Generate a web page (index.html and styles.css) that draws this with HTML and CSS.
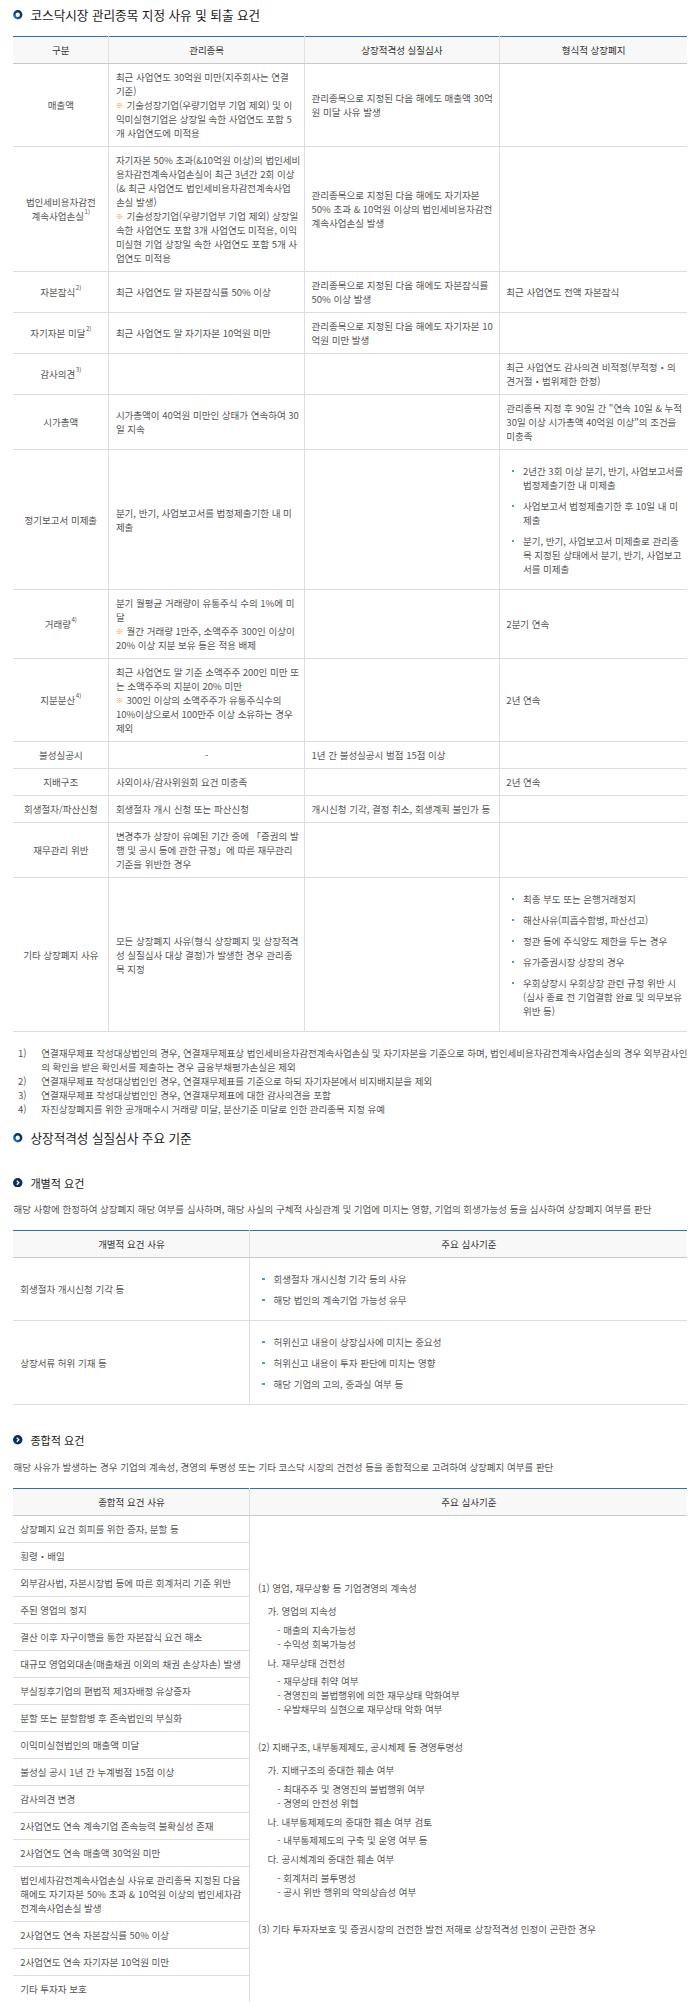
FILE: index.html
```html
<!DOCTYPE html>
<html lang="ko">
<head>
<meta charset="utf-8">
<title>코스닥시장 관리종목 지정 사유 및 퇴출 요건</title>
<link rel="stylesheet" href="styles.css">
</head>
<body>
<div class="page">
  <h2 class="title">
    <svg class="ring" viewBox="0 0 10 10" aria-hidden="true"><defs><linearGradient id="rg" x1="0" y1="1" x2="1" y2="0"><stop offset="0" stop-color="#1f8be0"/><stop offset="0.45" stop-color="#0e3d86"/><stop offset="1" stop-color="#0b2557"/></linearGradient></defs><circle cx="5" cy="5" r="3.6" fill="none" stroke="url(#rg)" stroke-width="2.6"/></svg>
    <span>코스닥시장 관리종목 지정 사유 및 퇴출 요건</span>
  </h2>

  <table class="tbl t4">
    <colgroup><col class="c1"><col class="c2"><col class="c3"><col class="c4"></colgroup>
    <thead>
      <tr><th>구분</th><th>관리종목</th><th>상장적격성 실질심사</th><th>형식적 상장폐지</th></tr>
    </thead>
    <tbody>
      <tr>
        <td class="k">매출액</td>
        <td class="lines">최근 사업연도 30억원 미만(지주회사는 연결<br>기준)<br><span class="mark">※</span> 기술성장기업(우량기업부 기업 제외) 및 이<br>익미실현기업은 상장일 속한 사업연도 포함 5<br>개 사업연도에 미적용</td>
        <td>관리종목으로 지정된 다음 해에도 매출액 30억원 미달 사유 발생</td>
        <td></td>
      </tr>
      <tr>
        <td class="k">법인세비용차감전<br>계속사업손실<sup>1)</sup></td>
        <td class="lines">자기자본 50% 초과(&amp;10억원 이상)의 법인세비<br>용차감전계속사업손실이 최근 3년간 2회 이상<br>(&amp; 최근 사업연도 법인세비용차감전계속사업<br>손실 발생)<br><span class="mark">※</span> 기술성장기업(우량기업부 기업 제외) 상장일<br>속한 사업연도 포함 3개 사업연도 미적용, 이익<br>미실현 기업 상장일 속한 사업연도 포함 5개 사<br>업연도 미적용</td>
        <td>관리종목으로 지정된 다음 해에도 자기자본 50% 초과 &amp; 10억원 이상의 법인세비용차감전계속사업손실 발생</td>
        <td></td>
      </tr>
      <tr>
        <td class="k">자본잠식<sup>2)</sup></td>
        <td>최근 사업연도 말 자본잠식률 50% 이상</td>
        <td>관리종목으로 지정된 다음 해에도 자본잠식률 50% 이상 발생</td>
        <td>최근 사업연도 전액 자본잠식</td>
      </tr>
      <tr>
        <td class="k">자기자본 미달<sup>2)</sup></td>
        <td>최근 사업연도 말 자기자본 10억원 미만</td>
        <td>관리종목으로 지정된 다음 해에도 자기자본 10억원 미만 발생</td>
        <td></td>
      </tr>
      <tr>
        <td class="k">감사의견<sup>3)</sup></td>
        <td></td>
        <td></td>
        <td>최근 사업연도 감사의견 비적정(부적정・의견거절・범위제한 한정)</td>
      </tr>
      <tr>
        <td class="k">시가총액</td>
        <td>시가총액이 40억원 미만인 상태가 연속하여 30일 지속</td>
        <td></td>
        <td>관리종목 지정 후 90일 간 "연속 10일 &amp; 누적 30일 이상 시가총액 40억원 이상"의 조건을 미충족</td>
      </tr>
      <tr>
        <td class="k">정기보고서 미제출</td>
        <td>분기, 반기, 사업보고서를 법정제출기한 내 미제출</td>
        <td></td>
        <td>
          <ul class="dots">
            <li class="lines">2년간 3회 이상 분기, 반기, 사업보고서를<br>법정제출기한 내 미제출</li>
            <li>사업보고서 법정제출기한 후 10일 내 미제출</li>
            <li>분기, 반기, 사업보고서 미제출로 관리종목 지정된 상태에서 분기, 반기, 사업보고서를 미제출</li>
          </ul>
        </td>
      </tr>
      <tr>
        <td class="k">거래량<sup>4)</sup></td>
        <td class="lines">분기 월평균 거래량이 유통주식 수의 1%에 미<br>달<br><span class="mark">※</span> 월간 거래량 1만주, 소액주주 300인 이상이<br>20% 이상 지분 보유 등은 적용 배제</td>
        <td></td>
        <td>2분기 연속</td>
      </tr>
      <tr>
        <td class="k">지분분산<sup>4)</sup></td>
        <td class="lines">최근 사업연도 말 기준 소액주주 200인 미만 또<br>는 소액주주의 지분이 20% 미만<br><span class="mark">※</span> 300인 이상의 소액주주가 유통주식수의<br>10%이상으로서 100만주 이상 소유하는 경우<br>제외</td>
        <td></td>
        <td>2년 연속</td>
      </tr>
      <tr>
        <td class="k">불성실공시</td>
        <td class="ctr">-</td>
        <td>1년 간 불성실공시 벌점 15점 이상</td>
        <td></td>
      </tr>
      <tr>
        <td class="k">지배구조</td>
        <td>사외이사/감사위원회 요건 미충족</td>
        <td></td>
        <td>2년 연속</td>
      </tr>
      <tr>
        <td class="k">회생절차/파산신청</td>
        <td>회생절차 개시 신청 또는 파산신청</td>
        <td>개시신청 기각, 결정 취소, 회생계획 불인가 등</td>
        <td></td>
      </tr>
      <tr>
        <td class="k">재무관리 위반</td>
        <td>변경추가 상장이 유예된 기간 중에 「증권의 발행 및 공시 등에 관한 규정」에 따른 재무관리 기준을 위반한 경우</td>
        <td></td>
        <td></td>
      </tr>
      <tr>
        <td class="k">기타 상장폐지 사유</td>
        <td>모든 상장폐지 사유(형식 상장폐지 및 상장적격성 실질심사 대상 결정)가 발생한 경우 관리종목 지정</td>
        <td></td>
        <td>
          <ul class="dots">
            <li>최종 부도 또는 은행거래정지</li>
            <li>해산사유(피흡수합병, 파산선고)</li>
            <li>정관 등에 주식양도 제한을 두는 경우</li>
            <li>유가증권시장 상장의 경우</li>
            <li>우회상장시 우회상장 관련 규정 위반 시 (심사 종료 전 기업결합 완료 및 의무보유 위반 등)</li>
          </ul>
        </td>
      </tr>
    </tbody>
  </table>

  <div class="notes">
    <div class="note"><span class="num">1)</span><span>연결재무제표 작성대상법인의 경우, 연결재무제표상 법인세비용차감전계속사업손실 및 자기자본을 기준으로 하며, 법인세비용차감전계속사업손실의 경우 외부감사인의 확인을 받은 확인서를 제출하는 경우 금융부채평가손실은 제외</span></div>
    <div class="note"><span class="num">2)</span><span>연결재무제표 작성대상법인인 경우, 연결재무제표를 기준으로 하되 자기자본에서 비지배지분을 제외</span></div>
    <div class="note"><span class="num">3)</span><span>연결재무제표 작성대상법인인 경우, 연결재무제표에 대한 감사의견을 포함</span></div>
    <div class="note"><span class="num">4)</span><span>자진상장폐지를 위한 공개매수시 거래량 미달, 분산기준 미달로 인한 관리종목 지정 유예</span></div>
  </div>

  <h2 class="title second">
    <svg class="ring" viewBox="0 0 10 10" aria-hidden="true"><defs><linearGradient id="rg2" x1="0" y1="1" x2="1" y2="0"><stop offset="0" stop-color="#1f8be0"/><stop offset="0.45" stop-color="#0e3d86"/><stop offset="1" stop-color="#0b2557"/></linearGradient></defs><circle cx="5" cy="5" r="3.6" fill="none" stroke="url(#rg2)" stroke-width="2.6"/></svg>
    <span>상장적격성 실질심사 주요 기준</span>
  </h2>

  <h3 class="sub first">
    <svg class="chev" viewBox="0 0 8 8" aria-hidden="true"><circle cx="4" cy="4" r="4" fill="#0d2c63"/><path d="M3.2 2.3 L4.9 4 L3.2 5.7" fill="none" stroke="#fff" stroke-width="1.1"/></svg>
    <span>개별적 요건</span>
  </h3>
  <p class="desc">해당 사항에 한정하여 상장폐지 해당 여부를 심사하며, 해당 사실의 구체적 사실관계 및 기업에 미치는 영향, 기업의 회생가능성 등을 심사하여 상장폐지 여부를 판단</p>

  <table class="tbl t2">
    <colgroup><col class="d1"><col class="d2"></colgroup>
    <thead>
      <tr><th>개별적 요건 사유</th><th>주요 심사기준</th></tr>
    </thead>
    <tbody>
      <tr>
        <td class="l">회생절차 개시신청 기각 등</td>
        <td>
          <ul class="dots">
            <li>회생절차 개시신청 기각 등의 사유</li>
            <li>해당 법인의 계속기업 가능성 유무</li>
          </ul>
        </td>
      </tr>
      <tr>
        <td class="l">상장서류 허위 기재 등</td>
        <td>
          <ul class="dots">
            <li>허위신고 내용이 상장심사에 미치는 중요성</li>
            <li>허위신고 내용이 투자 판단에 미치는 영향</li>
            <li>해당 기업의 고의, 중과실 여부 등</li>
          </ul>
        </td>
      </tr>
    </tbody>
  </table>

  <h3 class="sub">
    <svg class="chev" viewBox="0 0 8 8" aria-hidden="true"><circle cx="4" cy="4" r="4" fill="#0d2c63"/><path d="M3.2 2.3 L4.9 4 L3.2 5.7" fill="none" stroke="#fff" stroke-width="1.1"/></svg>
    <span>종합적 요건</span>
  </h3>
  <p class="desc">해당 사유가 발생하는 경우 기업의 계속성, 경영의 투명성 또는 기타 코스닥 시장의 건전성 등을 종합적으로 고려하여 상장폐지 여부를 판단</p>

  <table class="tbl t3">
    <colgroup><col class="d1"><col class="d2"></colgroup>
    <thead>
      <tr><th>종합적 요건 사유</th><th>주요 심사기준</th></tr>
    </thead>
    <tbody>
      <tr>
        <td class="l">상장폐지 요건 회피를 위한 증자, 분할 등</td>
        <td class="crit" rowspan="17">
          <div class="sec">
            <p class="h1">(1) 영업, 재무상황 등 기업경영의 계속성</p>
            <p class="h2">가. 영업의 지속성</p>
            <ul class="dash"><li>- 매출의 지속가능성</li><li>- 수익성 회복가능성</li></ul>
            <p class="h2">나. 재무상태 건전성</p>
            <ul class="dash"><li>- 재무상태 취약 여부</li><li>- 경영진의 불법행위에 의한 재무상태 악화여부</li><li>- 우발채무의 실현으로 재무상태 악화 여부</li></ul>
          </div>
          <div class="sec">
            <p class="h1">(2) 지배구조, 내부통제제도, 공시체제 등 경영투명성</p>
            <p class="h2">가. 지배구조의 중대한 훼손 여부</p>
            <ul class="dash"><li>- 최대주주 및 경영진의 불법행위 여부</li><li>- 경영의 안전성 위협</li></ul>
            <p class="h2">나. 내부통제제도의 중대한 훼손 여부 검토</p>
            <ul class="dash"><li>- 내부통제제도의 구축 및 운영 여부 등</li></ul>
            <p class="h2">다. 공시체계의 중대한 훼손 여부</p>
            <ul class="dash"><li>- 회계처리 불투명성</li><li>- 공시 위반 행위의 악의상습성 여부</li></ul>
          </div>
          <div class="sec last">
            <p class="h1">(3) 기타 투자자보호 및 증권시장의 건전한 발전 저해로 상장적격성 인정이 곤란한 경우</p>
          </div>
        </td>
      </tr>
      <tr><td class="l">횡령・배임</td></tr>
      <tr><td class="l">외부감사법, 자본시장법 등에 따른 회계처리 기준 위반</td></tr>
      <tr><td class="l">주된 영업의 정지</td></tr>
      <tr><td class="l">결산 이후 자구이행을 통한 자본잠식 요건 해소</td></tr>
      <tr><td class="l">대규모 영업외대손(매출채권 이외의 채권 손상차손) 발생</td></tr>
      <tr><td class="l">부실징후기업의 편법적 제3자배정 유상증자</td></tr>
      <tr><td class="l">분할 또는 분할합병 후 존속법인의 부실화</td></tr>
      <tr><td class="l">이익미실현법인의 매출액 미달</td></tr>
      <tr><td class="l">불성실 공시 1년 간 누계벌점 15점 이상</td></tr>
      <tr><td class="l">감사의견 변경</td></tr>
      <tr><td class="l">2사업연도 연속 계속기업 존속능력 불확실성 존재</td></tr>
      <tr><td class="l">2사업연도 연속 매출액 30억원 미만</td></tr>
      <tr><td class="l">법인세차감전계속사업손실 사유로 관리종목 지정된 다음 해에도 자기자본 50% 초과 &amp; 10억원 이상의 법인세차감전계속사업손실 발생</td></tr>
      <tr><td class="l">2사업연도 연속 자본잠식률 50% 이상</td></tr>
      <tr><td class="l">2사업연도 연속 자기자본 10억원 미만</td></tr>
      <tr><td class="l">기타 투자자 보호</td></tr>
    </tbody>
  </table>
</div>
</body>
</html>
```

FILE: styles.css
```css
html, body {
  margin: 0;
  padding: 0;
  background: #ffffff;
}

body {
  font-family: "Noto Sans CJK KR", "Noto Sans", sans-serif;
  color: #555555;
}

.page {
  width: 674px;
  padding: 7px 0 20px 13.4px;
  font-size: 9.5px;
  line-height: 14px;
}

/* headings */
.title {
  display: flex;
  align-items: center;
  gap: 7.6px;
  margin: 0;
  font-size: 12.6px;
  line-height: 16px;
  font-weight: normal;
  color: #1a1a1a;
}

.title.second {
  margin-top: 14px;
}

.ring {
  width: 9.5px;
  height: 9.5px;
  flex: none;
}

.sub {
  display: flex;
  align-items: center;
  gap: 7.5px;
  margin: 28px 0 0;
  font-size: 11.1px;
  line-height: 14px;
  font-weight: normal;
  color: #1a1a1a;
}

.sub.first {
  margin-top: 29.5px;
}

.chev {
  width: 9.5px;
  height: 9.5px;
  flex: none;
}

.desc {
  margin: 12.6px 0 0;
}

/* tables */
.tbl {
  width: 674px;
  border-collapse: collapse;
  table-layout: fixed;
  border-top: 1px solid #2f6fb8;
  border-bottom: 1px solid #dddddd;
}

.t4 {
  margin-top: 13px;
}

.t2,
.t3 {
  margin-top: 14px;
}

.c1 { width: 95.4px; }
.c2 { width: 195.7px; }
.c3 { width: 194.8px; }
.c4 { width: 188.1px; }

.d1 { width: 236.5px; }
.d2 { width: 437.5px; }

.tbl th {
  padding: 6px 5px;
  background: #f8f8f8;
  font-weight: normal;
  color: #333333;
  text-align: center;
  border-bottom: 1px solid #c9c9c9;
  border-left: 1px solid #e1e1e1;
}

.tbl td {
  padding: 6px 5px 6px 6.6px;
  vertical-align: middle;
  text-align: left;
  border-bottom: 1px solid #dddddd;
  border-left: 1px solid #dddddd;
}

.tbl th:first-child,
.tbl td:first-child {
  border-left: none;
}

.tbl td.crit {
  border-left: 1px solid #dddddd;
  padding-left: 7.6px;
}

.tbl td.k,
.tbl td.ctr {
  text-align: center;
  padding-left: 5px;
}

.tbl td.l {
  padding-left: 6.8px;
}

/* cells whose line breaks follow the source exactly */
.lines {
  white-space: nowrap;
}

sup {
  font-size: 6.2px;
  line-height: 6px;
  vertical-align: top;
  margin-left: 0.5px;
}

.mark {
  display: inline-block;
  margin-right: 1px;
  font-size: 7px;
  line-height: 14px;
  vertical-align: top;
  color: #f0900a;
}

/* bullet lists */
.dots {
  list-style: none;
  margin: 0;
  padding: 7.5px 0 7.5px 5.5px;
}

.dots li {
  display: flex;
  gap: 8.6px;
}

.dots li + li {
  margin-top: 7px;
}

.dots li::before {
  content: "";
  flex: none;
  width: 2.5px;
  height: 2.5px;
  margin-top: 6px;
  background: #4a9ad8;
}

/* criteria column */
.sec {
  margin-bottom: 23.5px;
}

.sec.last {
  margin-bottom: 0;
}

.h1 {
  margin: 0 0 9.3px;
}

.sec.last .h1 {
  margin-bottom: 0;
}

.h2 {
  margin: 0 0 4.5px;
  padding-left: 9.4px;
}

.dash {
  list-style: none;
  margin: 0 0 5px;
  padding: 0 0 0 19.2px;
}

.sec .dash:last-child {
  margin-bottom: 0;
}

/* footnotes */
.notes {
  margin: 14px -6px 0 0;
}

.note {
  display: grid;
  grid-template-columns: 23.3px 1fr;
  padding-left: 4.5px;
}
```
